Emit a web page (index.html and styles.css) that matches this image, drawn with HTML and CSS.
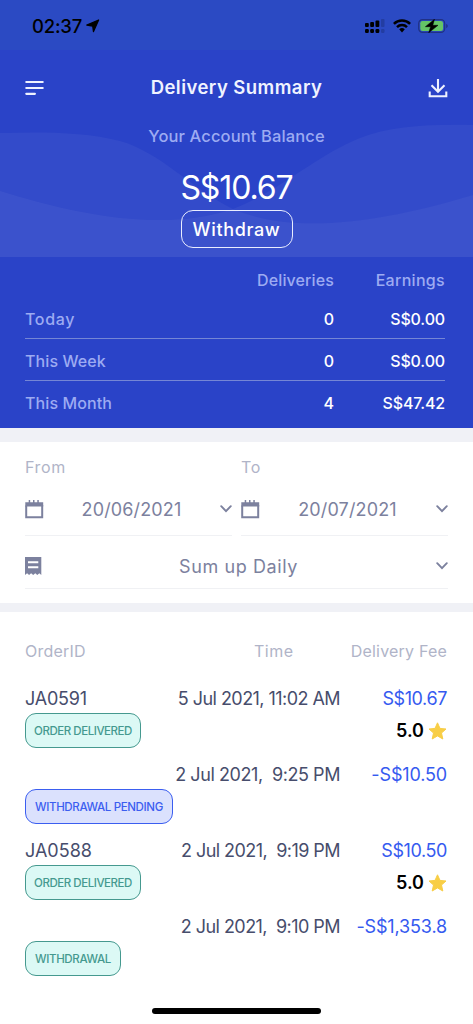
FILE: index.html
```html
<!DOCTYPE html>
<html lang="en">
<head>
<meta charset="utf-8">
<title>Delivery Summary</title>
<link rel="stylesheet" href="styles.css">
</head>
<body>
<div class="screen">
  <div class="statusbar">
    <div class="clock"><span class="clock-time">02:37</span>
      <svg width="14" height="14" viewBox="0 0 14 14"><path d="M12.600 1 .8 6.100 6.700 7l.8 5.600z" fill="#000" stroke="#000" stroke-width="1.300" stroke-linejoin="round"/></svg>
    </div>
    <div class="indicators">
      <svg width="20" height="14" viewBox="0 0 20 14"><g fill="#000"><rect y="4" width="3.8" height="4" rx="1"/><rect x="5.200" y="3" width="3.8" height="5" rx="1"/><rect x="10.500" y="1.500" width="3.8" height="6.500" rx="1"/><rect y="10" width="3.8" height="4" rx="1.200"/><rect x="5.200" y="10" width="3.8" height="4" rx="1.200"/><rect x="10.500" y="10" width="3.8" height="4" rx="1.200"/></g><g fill="#233da2"><rect x="16" width="3.500" height="8" rx="1"/><rect x="16" y="10" width="3.500" height="4" rx="1.200"/></g></svg>
      <svg class="wifi" width="18" height="14" viewBox="0 0 18 14"><g fill="none" stroke="#000" stroke-width="2.500"><path d="M.9 4.900a11.400 11.400 0 0 1 16.200 0"/><path d="M4 8.100a7.200 7.200 0 0 1 10 0"/></g><path d="M6.200 10.300a4.200 4.200 0 0 1 5.600 0L9 13.400z" fill="#000"/></svg>
      <svg class="battery" width="30" height="14" viewBox="0 0 30 14"><rect x=".7" y=".6" width="26" height="12.800" rx="3.800" fill="none" stroke="#203184" stroke-width="1.200"/><rect x="2.300" y="2.100" width="22.800" height="9.800" rx="2.200" fill="#65c466"/><path d="M28.200 4.700q1.600.8 1.600 2.300t-1.600 2.300z" fill="#203184"/><path d="M16.500.2 7.400 7.700h5.200L10.700 13.800 20 6.300h-5.200z" fill="#000" stroke="#000" stroke-width=".5"/></svg>
    </div>
  </div>

  <section class="hero">
    <svg class="waves" width="473" height="134" viewBox="0 0 473 134"><g fill="#fff" fill-opacity=".045"><path d="M0 10C45 9 85 9 120 18C160 29 192 66 233 86C290 110 370 103 473 72V134H0z"/><path d="M473 2C430 1 390 3 360 15C315 33 280 68 233 86C165 109 80 93 0 68V134H473z"/></g></svg>
    <header class="navbar">
      <svg width="20" height="16" viewBox="0 0 20 16"><path d="M1.300 2h16.400M1.300 8h16.400M1.300 13.800h8.600" stroke="#eef1ff" stroke-width="2.200" stroke-linecap="round"/></svg>
      <h1 class="title">Delivery Summary</h1>
      <svg width="20" height="20" viewBox="0 0 20 20" fill="none" stroke="#eef1ff" stroke-width="2.100"><path d="M10 1v12.500M3.500 7.200 10 13.700l6.500-6.500M1.700 13.600v4.600h16.600v-4.600"/></svg>
    </header>
    <p class="caption">Your Account Balance</p>
    <p class="balance">S$10.67</p>
    <button class="withdraw"><span>Withdraw</span></button>
  </section>

  <section class="totals">
    <div class="totals-row totals-head"><span></span><span class="h-del">Deliveries</span><span class="h-earn">Earnings</span></div>
    <div class="totals-row"><span class="t-today">Today</span><b>0</b><b class="money">S$0.00</b></div>
    <div class="totals-row"><span class="t-period">This Week</span><b>0</b><b class="money">S$0.00</b></div>
    <div class="totals-row"><span class="t-period">This Month</span><b>4</b><b class="money">S$47.42</b></div>
  </section>

  <section class="filters">
    <div class="dates">
      <div class="field">
        <label>From</label>
        <div class="control">
          <svg width="19" height="19" viewBox="0 0 19 19"><path d="M1.200 5.500V17.200h16V5" fill="none" stroke="#7c819e" stroke-width="2"/><path d="M.3 2.300h3.400V0h1.500v2.300h2.800V0h1.500v2.300h2.800V0h1.500v2.300h4.400V6.500H.3z" fill="#7c819e"/></svg>
          <span class="date">20/06/2021</span>
          <svg width="12" height="8" viewBox="0 0 12 8"><path d="m1.200 1.200 4.800 4.900 4.800-4.900" fill="none" stroke="#7c819e" stroke-width="1.900" stroke-linecap="round"/></svg>
        </div>
      </div>
      <div class="field">
        <label>To</label>
        <div class="control">
          <svg width="19" height="19" viewBox="0 0 19 19"><path d="M1.200 5.500V17.200h16V5" fill="none" stroke="#7c819e" stroke-width="2"/><path d="M.3 2.300h3.400V0h1.500v2.300h2.800V0h1.500v2.300h2.800V0h1.500v2.300h4.400V6.500H.3z" fill="#7c819e"/></svg>
          <span class="date">20/07/2021</span>
          <svg width="12" height="8" viewBox="0 0 12 8"><path d="m1.200 1.200 4.800 4.900 4.800-4.900" fill="none" stroke="#7c819e" stroke-width="1.900" stroke-linecap="round"/></svg>
        </div>
      </div>
    </div>
    <div class="control grouping">
      <svg width="17" height="18" viewBox="0 0 17 18"><path d="M0 0h16.300v18l-2-1.700-2 1.700-2-1.700-2.100 1.700-2.100-1.700-2 1.700-2-1.700L0 18z" fill="#7c819e"/><path d="M3 5.300h10.300M3 10.300h10.300" stroke="#fff" stroke-width="1.900"/></svg>
      <span class="group-text">Sum up Daily</span>
      <svg width="12" height="8" viewBox="0 0 12 8"><path d="m1.200 1.200 4.800 4.900 4.800-4.900" fill="none" stroke="#7c819e" stroke-width="1.900" stroke-linecap="round"/></svg>
    </div>
  </section>

  <section class="orders">
    <div class="orders-head"><span>OrderID</span><span class="o-time">Time</span><span class="o-fee">Delivery Fee</span></div>
    <article class="order">
      <div class="line"><span class="id-a">JA0591</span><time>5 Jul 2021, 11:02 AM</time><span class="fee fee-tight">S$10.67</span></div>
      <div class="meta"><span class="badge delivered">ORDER DELIVERED</span><span class="rating">5.0<svg width="19" height="18" viewBox="0 0 19 18"><path d="m9.500.8 2.500 5.600 6 .6-4.500 4 1.300 6-5.300-3.100L4.200 17l1.300-6L1 7l6-.6z" fill="#f8ce46" stroke="#f8ce46" stroke-width="1" stroke-linejoin="round"/></svg></span></div>
    </article>
    <article class="order">
      <div class="line"><span></span><time class="time-wide">2 Jul 2021,&nbsp; 9:25 PM</time><span class="fee">-S$10.50</span></div>
      <div class="meta"><span class="badge pending">WITHDRAWAL PENDING</span></div>
    </article>
    <article class="order">
      <div class="line"><span>JA0588</span><time>2 Jul 2021,&nbsp; 9:19 PM</time><span class="fee fee-tight">S$10.50</span></div>
      <div class="meta"><span class="badge delivered">ORDER DELIVERED</span><span class="rating">5.0<svg width="19" height="18" viewBox="0 0 19 18"><path d="m9.500.8 2.500 5.600 6 .6-4.500 4 1.300 6-5.300-3.100L4.200 17l1.300-6L1 7l6-.6z" fill="#f8ce46" stroke="#f8ce46" stroke-width="1" stroke-linejoin="round"/></svg></span></div>
    </article>
    <article class="order">
      <div class="line"><span></span><time>2 Jul 2021,&nbsp; 9:10 PM</time><span class="fee">-S$1,353.8</span></div>
      <div class="meta"><span class="badge withdrawal">WITHDRAWAL</span></div>
    </article>
  </section>
  <footer class="home"><span class="home-bar"></span></footer>
</div>
</body>
</html>
```
FILE: styles.css
```css
* { box-sizing: border-box; }
body { margin: 0; background: #fff; font-family: Inter, "Open Sans", sans-serif; }
svg { display: block; flex: none; }
h1, p { margin: 0; }
.screen { width: 473px; height: 1024px; display: flex; flex-direction: column; overflow: hidden; white-space: nowrap; }

.statusbar { height: 50px; flex: none; background: #2b4ac3; display: flex; justify-content: space-between; padding: 19px 25px 0 32px; }
.clock { display: flex; align-items: flex-start; gap: 4px; height: 14px; }
.clock-time { font-size: 18.500px; font-weight: 500; line-height: 15px; letter-spacing: -.2px; }
.indicators { display: flex; height: 14px; }
.wifi { margin-left: 8px; }
.battery { margin-left: 7px; }

.hero { height: 207px; flex: none; position: relative; background: #2a43c8; display: flex; flex-direction: column; align-items: center; color: #fff; }
.waves { position: absolute; left: 0; bottom: 0; }
.navbar { position: relative; width: 100%; height: 76px; padding: 0 25px; display: flex; align-items: center; justify-content: space-between; }
.title { font-size: 18.500px; line-height: 24px; padding-bottom: 2px; font-weight: 600; letter-spacing: .45px; color: #f0f3ff; }
.caption { position: relative; font-size: 16.500px; font-weight: 500; line-height: 20px; letter-spacing: .12px; color: #9dabf2; }
.balance { position: relative; margin-top: 22px; font-size: 32px; line-height: 40px; font-weight: 400; letter-spacing: -1.100px; }
.withdraw { position: relative; margin-top: 2px; width: 112px; height: 38px; padding: 0; border: 1.500px solid #e9edff; border-radius: 12px; background: none; color: #fff; font: 500 18px Inter, sans-serif; letter-spacing: .65px; }

.totals { height: 171px; flex: none; background: #2a43c8; color: #9dabf2; padding: 5px 28px 0 25px; font-size: 16px; font-weight: 500; }
.totals-row { height: 42px; padding-top: 2px; display: grid; grid-template-columns: 1fr 110px 111px; align-items: center; border-bottom: 1px solid #7586d5; }
.totals-row > :nth-child(n+2) { text-align: right; }
.totals-head { height: 35px; padding-top: 1px; border-bottom: 0; }
.totals-row:last-child { border-bottom: 0; }
.totals-row b { font-weight: 500; color: #fff; }
.h-del { letter-spacing: .12px; }
.h-earn { letter-spacing: .3px; }
.t-today { letter-spacing: .65px; }
.t-period { letter-spacing: .1px; }
.money { letter-spacing: -.15px; }

.filters { height: 184px; flex: none; border-top: 14px solid #f0f1f6; border-bottom: 9px solid #f0f1f6; padding: 14px 25px 0; color: #7c819e; }
.dates { display: grid; grid-template-columns: 207px 207px; gap: 9px; }
.field label { display: block; font-size: 16px; line-height: 22px; letter-spacing: .6px; color: #b0b4c8; }
.control { display: flex; align-items: center; justify-content: space-between; height: 58px; padding-top: 5px; border-bottom: 1px solid #f0f1f4; font-size: 18px; }
.date { letter-spacing: .15px; padding-right: 1px; }
.grouping { height: 53px; padding-top: 8px; }
.group-text { letter-spacing: .6px; padding-right: 1px; }

.orders { flex: 1; padding: 26px 26px 0 25px; }
.orders-head { display: grid; grid-template-columns: 1fr 40px 153px; font-size: 16px; line-height: 26px; height: 45px; letter-spacing: .2px; color: #b0b4c8; }
.o-time { letter-spacing: .5px; }
.o-fee { text-align: right; }
.order { height: 76px; }
.line { height: 30px; display: grid; grid-template-columns: 100px 1fr 107px; align-items: end; font-size: 18px; line-height: 28px; color: #474d6c; }
.line time, .fee { text-align: right; }
.line time { letter-spacing: -.55px; }
.line .time-wide { letter-spacing: -.43px; }
.id-a { letter-spacing: -.2px; }
.fee { color: #355af0; letter-spacing: -.15px; }
.fee-tight { letter-spacing: -.4px; }
.meta { display: flex; justify-content: space-between; align-items: center; height: 35px; }
.badge { height: 35px; border: 1px solid; border-radius: 11px; font-size: 11.500px; font-weight: 500; line-height: 34px; text-align: center; letter-spacing: -.45px; }
.delivered, .withdrawal { background: #dcf9f5; color: #45998f; }
.delivered { width: 116px; }
.pending { width: 148px; background: #dbe1fd; color: #3b5ef0; letter-spacing: -.35px; }
.withdrawal { width: 96px; letter-spacing: -.35px; }
.rating { display: flex; align-items: center; gap: 4px; font-size: 18px; font-weight: 600; color: #000; }
.home { height: 16px; flex: none; display: flex; justify-content: center; }
.home-bar { width: 169px; height: 6px; border-radius: 3px; background: #000; }
```
